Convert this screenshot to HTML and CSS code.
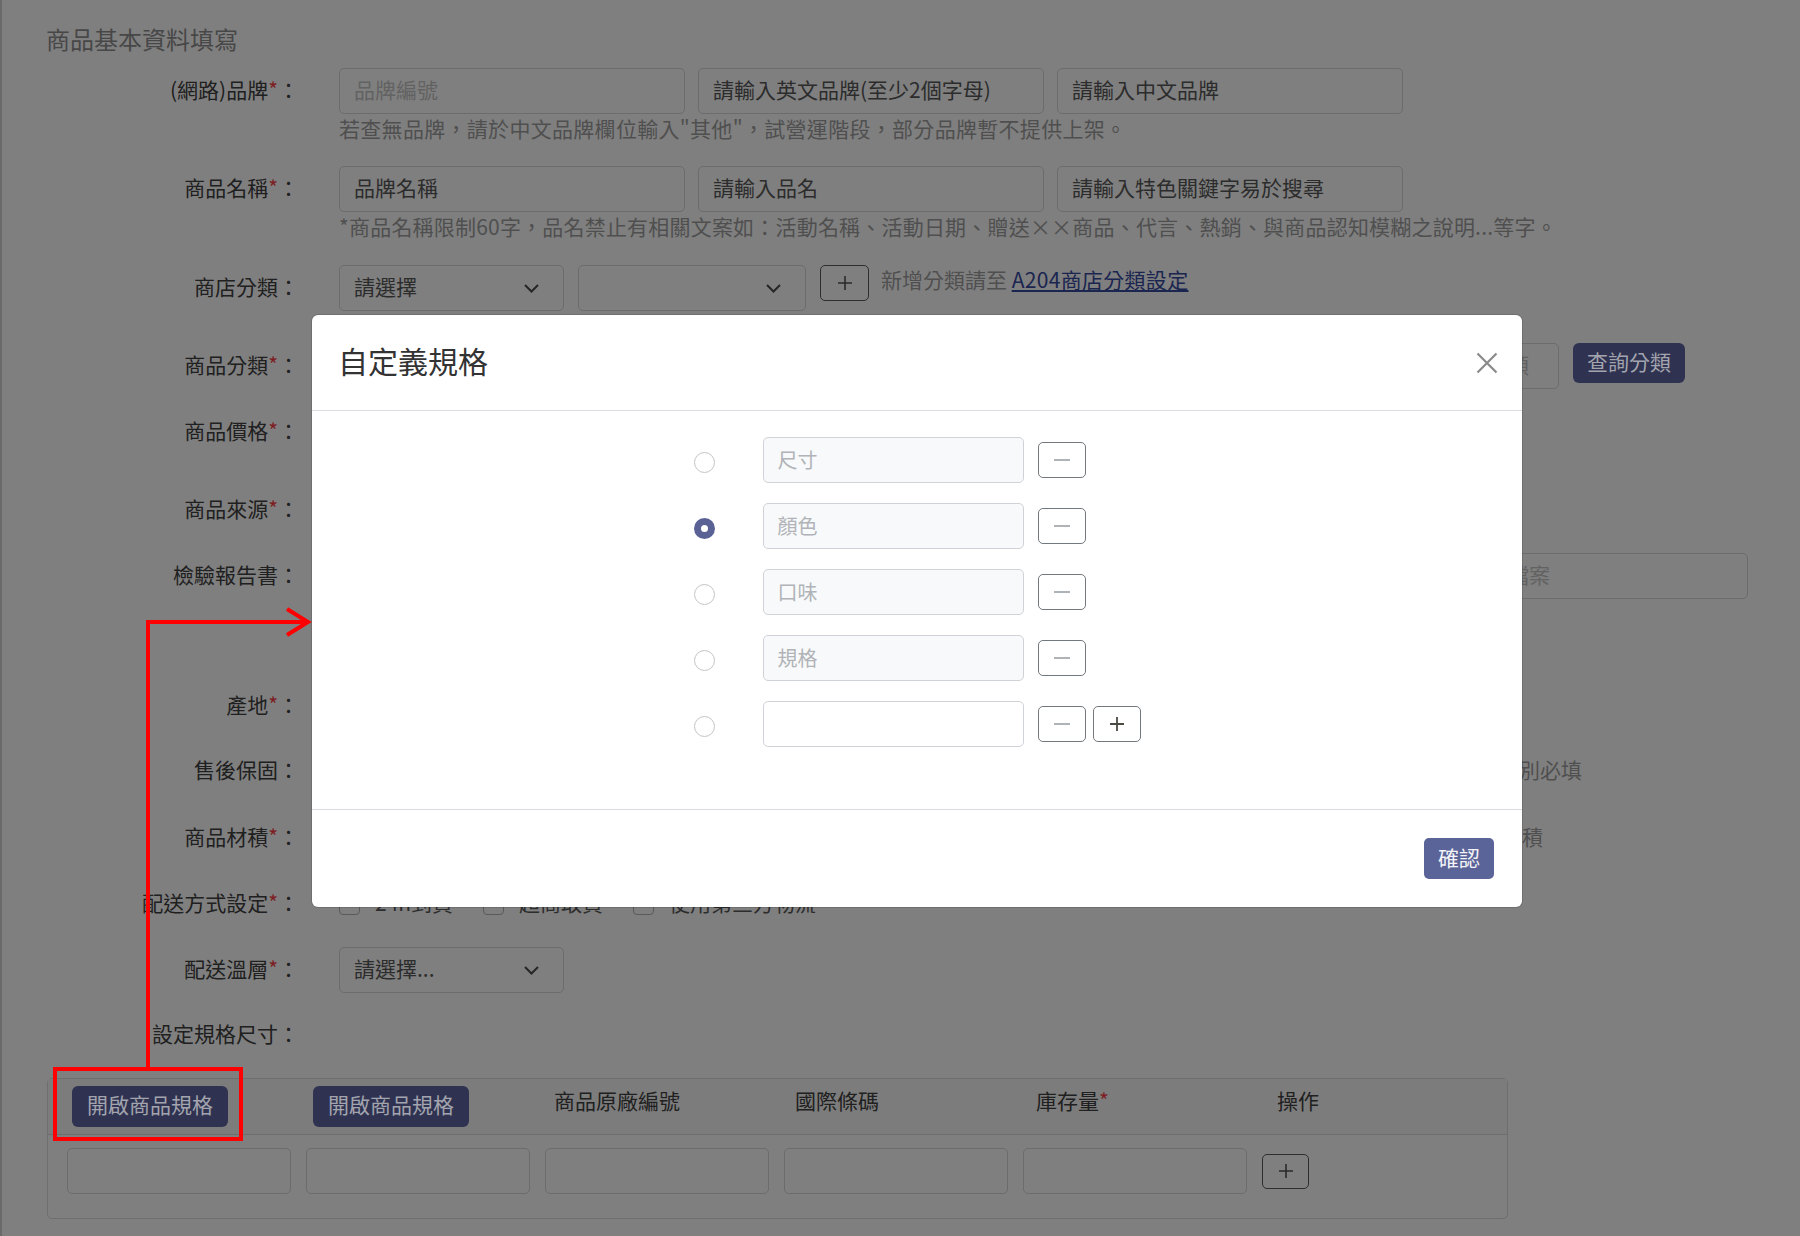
FILE: index.html
```html
<!DOCTYPE html>
<html lang="zh-Hant">
<head>
<meta charset="utf-8">
<title>自定義規格</title>
<link rel="stylesheet" href="styles.css">
</head>
<body>
<div class="page">
  <h1 class="page-title">商品基本資料填寫</h1>

  <div class="row mt-16">
    <div class="lbl">(網路)品牌<span class="req">*</span>：</div>
    <div class="ctrl gap-13">
      <div class="field w-346 muted">品牌編號</div>
      <div class="field w-346">請輸入英文品牌(至少2個字母)</div>
      <div class="field w-346">請輸入中文品牌</div>
    </div>
  </div>
  <p class="hint">若查無品牌，請於中文品牌欄位輸入"其他"，試營運階段，部分品牌暫不提供上架。</p>

  <div class="row mt-26">
    <div class="lbl">商品名稱<span class="req">*</span>：</div>
    <div class="ctrl gap-13">
      <div class="field w-346">品牌名稱</div>
      <div class="field w-346">請輸入品名</div>
      <div class="field w-346">請輸入特色關鍵字易於搜尋</div>
    </div>
  </div>
  <p class="hint tight">*商品名稱限制60字，品名禁止有相關文案如：活動名稱、活動日期、贈送××商品、代言、熱銷、與商品認知模糊之說明...等字。</p>

  <div class="row mt-27">
    <div class="lbl">商店分類：</div>
    <div class="ctrl top">
      <div class="field select w-225">請選擇<svg class="chev" width="15" height="9" viewBox="0 0 15 9"><path d="M1 1l6.5 6.5L14 1" fill="none" stroke="#262626" stroke-width="2"/></svg></div>
      <div class="field select w-228"><span></span><svg class="chev" width="15" height="9" viewBox="0 0 15 9"><path d="M1 1l6.5 6.5L14 1" fill="none" stroke="#262626" stroke-width="2"/></svg></div>
      <div class="icon-btn dark-btn"><svg width="16" height="16" viewBox="0 0 16 16"><path d="M8 1v14M1 8h14" stroke="#2b2b2b" stroke-width="1.6"/></svg></div>
      <span class="note top-note">新增分類請至 <a class="link" href="#">A204商店分類設定</a></span>
    </div>
  </div>

  <div class="row mt-32">
    <div class="lbl">商品分類<span class="req">*</span>：</div>
    <div class="ctrl top">
      <div class="field select w-225"></div>
      <div class="field select w-228"></div>
      <div class="field w-428"></div>
      <div class="field w-297 muted">請輸入關鍵字搜尋商品分類</div>
      <button class="btn-dark h-40">查詢分類</button>
    </div>
  </div>

  <div class="row mt-20">
    <div class="lbl">商品價格<span class="req">*</span>：</div>
    <div class="ctrl">
      <div class="field w-346"></div>
      <div class="field w-346"></div>
    </div>
  </div>

  <div class="row mt-32">
    <div class="lbl">商品來源<span class="req">*</span>：</div>
    <div class="ctrl">
      <div class="field select w-225"></div>
    </div>
  </div>

  <div class="row mt-20">
    <div class="lbl">檢驗報告書：</div>
    <div class="ctrl">
      <div class="field w-993"></div>
      <div class="field w-402 muted">請選擇要上傳的檔案</div>
    </div>
  </div>

  <div class="row mt-84">
    <div class="lbl">產地<span class="req">*</span>：</div>
    <div class="ctrl">
      <div class="field select w-225"></div>
    </div>
  </div>

  <div class="row mt-19">
    <div class="lbl">售後保固：</div>
    <div class="ctrl">
      <div class="field select w-225"></div>
      <div class="field w-612"></div>
      <span class="note">若有提供保固，保固期間及保固類別必填</span>
    </div>
  </div>

  <div class="row mt-21">
    <div class="lbl">商品材積<span class="req">*</span>：</div>
    <div class="ctrl">
      <div class="field w-373"></div>
      <div class="field w-373"></div>
      <div class="field w-374"></div>
      <span class="note">材積</span>
    </div>
  </div>

  <div class="row mt-20">
    <div class="lbl">配送方式設定<span class="req">*</span>：</div>
    <div class="ctrl checks">
      <label class="check"><span class="box"></span>24h到貨</label>
      <label class="check"><span class="box"></span>超商取貨</label>
      <label class="check"><span class="box"></span>使用第三方物流</label>
    </div>
  </div>

  <div class="row mt-20">
    <div class="lbl">配送溫層<span class="req">*</span>：</div>
    <div class="ctrl">
      <div class="field select w-225">請選擇...<svg class="chev" width="15" height="9" viewBox="0 0 15 9"><path d="M1 1l6.5 6.5L14 1" fill="none" stroke="#262626" stroke-width="2"/></svg></div>
    </div>
  </div>

  <div class="row mt-19">
    <div class="lbl">設定規格尺寸：</div>
  </div>

  <div class="spec-table mt-20">
    <div class="spec-head">
      <div class="th"><button class="btn-dark">開啟商品規格</button></div>
      <div class="th"><button class="btn-dark">開啟商品規格</button></div>
      <div class="th">商品原廠編號</div>
      <div class="th">國際條碼</div>
      <div class="th">庫存量<span class="req">*</span></div>
      <div class="th">操作</div>
    </div>
    <div class="spec-body">
      <div class="field"></div>
      <div class="field"></div>
      <div class="field"></div>
      <div class="field"></div>
      <div class="field"></div>
      <div class="icon-btn dark-btn small"><svg width="16" height="16" viewBox="0 0 16 16"><path d="M8 1v14M1 8h14" stroke="#2b2b2b" stroke-width="1.6"/></svg></div>
    </div>
  </div>
</div>

<div class="modal">
  <div class="modal-header">
    <h2 class="modal-title">自定義規格</h2>
    <svg class="close" width="22" height="22" viewBox="0 0 22 22"><path d="M1.5 1.5l19 19M20.5 1.5l-19 19" stroke="#8a8a8a" stroke-width="2.2" fill="none"/></svg>
  </div>
  <div class="modal-body">
    <div class="spec-list">
      <div class="spec-row">
        <span class="radio"></span>
        <div class="spec-input">尺寸</div>
        <div class="sq-btn"><span class="minus"></span></div>
      </div>
      <div class="spec-row">
        <span class="radio checked"></span>
        <div class="spec-input">顏色</div>
        <div class="sq-btn"><span class="minus"></span></div>
      </div>
      <div class="spec-row">
        <span class="radio"></span>
        <div class="spec-input">口味</div>
        <div class="sq-btn"><span class="minus"></span></div>
      </div>
      <div class="spec-row">
        <span class="radio"></span>
        <div class="spec-input">規格</div>
        <div class="sq-btn"><span class="minus"></span></div>
      </div>
      <div class="spec-row">
        <span class="radio"></span>
        <div class="spec-input empty"></div>
        <div class="sq-btn"><span class="minus"></span></div>
        <div class="sq-btn plus"><svg width="16" height="16" viewBox="0 0 16 16"><path d="M8 1v14M1 8h14" stroke="#4a4a44" stroke-width="1.8"/></svg></div>
      </div>
    </div>
  </div>
  <div class="modal-footer">
    <button class="btn-primary">確認</button>
  </div>
</div>

<svg class="annot" width="1800" height="1236" viewBox="0 0 1800 1236">
  <rect x="55" y="1069" width="186" height="70" fill="none" stroke="#ff0000" stroke-width="4"/>
  <polyline points="148,1067 148,622 307,622" fill="none" stroke="#ff0000" stroke-width="4"/>
  <polyline points="287,609 308,622 287,635" fill="none" stroke="#ff0000" stroke-width="4"/>
</svg>
</body>
</html>
```

FILE: styles.css
```css
* { box-sizing: border-box; }

body {
  margin: 0;
  width: 1800px;
  height: 1236px;
  overflow: hidden;
  position: relative;
  background: #7f7f7f;
  box-shadow: inset 2px 0 0 #6a6a6a;
  font-family: "Noto Sans CJK TC", "Noto Sans", sans-serif;
  color: #222;
}

.page { padding-top: 26px; }

.page-title {
  margin: 0 0 0 46px;
  font-size: 24px;
  line-height: 26px;
  font-weight: 400;
  color: #474747;
}

/* spacing utilities */
.mt-16 { margin-top: 16px; }
.mt-19 { margin-top: 19px; }
.mt-20 { margin-top: 20px; }
.mt-21 { margin-top: 21px; }
.mt-26 { margin-top: 26px; }
.mt-27 { margin-top: 27px; }
.mt-32 { margin-top: 32px; }
.mt-84 { margin-top: 84px; }

.row {
  display: flex;
  align-items: center;
  height: 46px;
}

.lbl {
  width: 299px;
  flex: none;
  text-align: right;
  font-size: 21px;
  line-height: 42px;
  padding-bottom: 4px;
  color: #202020;
  white-space: nowrap;
}

.req { color: #7c1e24; }

.ctrl {
  margin-left: 40px;
  display: flex;
  align-items: center;
  gap: 14px;
  height: 46px;
}
.ctrl.top { align-items: flex-start; }
.gap-13 { gap: 13px; }

.hint {
  margin: 2px 0 0 339px;
  font-size: 21px;
  line-height: 24px;
  color: #4f4f4f;
  white-space: nowrap;
  letter-spacing: 0.3px;
}
.hint.tight { letter-spacing: 0.2px; }

.field {
  flex: none;
  height: 46px;
  border: 1px solid #6c6c6c;
  border-radius: 5px;
  padding: 0 14px 4px;
  display: flex;
  align-items: center;
  font-size: 21px;
  color: #2c2c2c;
  white-space: nowrap;
  overflow: hidden;
}
.field.muted { color: #626262; }
.field.select { justify-content: space-between; padding-right: 24px; }
.chev { flex: none; margin-top: 4px; }

.w-225 { width: 225px; }
.w-228 { width: 228px; }
.w-297 { width: 297px; }
.w-346 { width: 346px; }
.w-373 { width: 373px; }
.w-374 { width: 374px; }
.w-402 { width: 402px; }
.w-428 { width: 428px; }
.w-612 { width: 612px; }
.w-993 { width: 993px; }

.icon-btn {
  flex: none;
  width: 49px;
  height: 36px;
  border-radius: 5px;
  display: flex;
  align-items: center;
  justify-content: center;
}
.dark-btn { border: 1.5px solid #2e2e2e; }
.icon-btn.small { width: 47px; height: 35px; }

.note {
  font-size: 21px;
  line-height: 42px;
  padding-bottom: 4px;
  color: #4f4f4f;
  white-space: nowrap;
}
.note.top-note { line-height: 28px; padding: 0; margin-left: -2px; }
.link { color: #1a2550; text-decoration: underline; letter-spacing: 0.3px; }

.btn-dark {
  flex: none;
  height: 41px;
  padding: 0 15px 4px;
  border: 0;
  border-radius: 6px;
  background: #2f3351;
  color: #a3a4ae;
  font-family: inherit;
  font-size: 21px;
  line-height: 37px;
}
.btn-dark.h-40 { height: 40px; line-height: 36px; padding: 0 14px 4px; }

.checks { gap: 30px; }
.check {
  display: flex;
  align-items: center;
  gap: 15px;
  font-size: 21px;
  line-height: 42px;
  padding-bottom: 4px;
  color: #2c2c2c;
  white-space: nowrap;
}
.box {
  width: 21px;
  height: 21px;
  margin-top: 4px;
  border: 1.5px solid #5a5a5a;
  border-radius: 4px;
}

/* spec table (background) */
.spec-table {
  margin-left: 47px;
  width: 1461px;
  border: 1px solid #6e6e6e;
  border-radius: 5px;
}
.spec-head {
  display: grid;
  grid-template-columns: repeat(6, 241px);
  padding: 7px 0 7px 24px;
  border-bottom: 1px solid #6e6e6e;
  background: #7c7c7c;
}
.th {
  font-size: 21px;
  line-height: 28px;
  color: #202020;
  white-space: nowrap;
}
.spec-body {
  display: grid;
  grid-template-columns: repeat(5, 224px) 47px;
  column-gap: 15px;
  align-items: center;
  padding: 13px 0 24px 19px;
}
.spec-body .field { width: 224px; }

/* modal */
.modal {
  position: absolute;
  left: 312px;
  top: 315px;
  width: 1210px;
  height: 592px;
  background: #fff;
  border-radius: 6px;
  box-shadow: 0 0 0 1px rgba(0, 0, 0, 0.12);
  display: flex;
  flex-direction: column;
  overflow: hidden;
  z-index: 10;
}
.modal-header {
  height: 96px;
  flex: none;
  border-bottom: 1px solid #d9dce0;
  display: flex;
  align-items: center;
  justify-content: space-between;
  padding: 0 24px 0 26px;
}
.modal-title {
  margin: 0;
  padding-bottom: 6px;
  font-size: 30px;
  line-height: 36px;
  font-weight: 400;
  color: #333;
}
.close { flex: none; }

.modal-body {
  height: 398px;
  flex: none;
  padding-top: 26px;
}
.spec-list {
  width: 447px;
  margin: 0 auto;
  display: flex;
  flex-direction: column;
  gap: 20px;
}
.spec-row {
  display: flex;
  align-items: center;
  height: 46px;
}
.radio {
  flex: none;
  width: 21px;
  height: 21px;
  margin: 4px 48px 0 0;
  border: 1.5px solid #c4c4c4;
  border-radius: 50%;
  background: #fff;
}
.radio.checked { border: 7px solid #5a6195; }
.spec-input {
  flex: none;
  width: 261px;
  height: 46px;
  margin-right: 14px;
  padding: 0 14px 2px;
  border: 1px solid #cfd3d7;
  border-radius: 5px;
  background: #f8f9fa;
  display: flex;
  align-items: center;
  font-size: 20px;
  color: #b0b3b7;
}
.spec-input.empty { background: #fff; }
.sq-btn {
  flex: none;
  width: 48px;
  height: 36px;
  border: 1.5px solid #73787e;
  border-radius: 5px;
  display: flex;
  align-items: center;
  justify-content: center;
  background: #fff;
}
.sq-btn.plus { margin-left: 7px; }
.minus {
  width: 16px;
  height: 2px;
  background: #aeb3b8;
}

.modal-footer {
  height: 98px;
  flex: none;
  border-top: 1px solid #d9dce0;
  display: flex;
  justify-content: flex-end;
  align-items: center;
  padding-right: 28px;
}
.btn-primary {
  height: 41px;
  padding: 0 14px 2px;
  border: 0;
  border-radius: 5px;
  background: #5b6498;
  color: #f4f4f8;
  font-family: inherit;
  font-size: 21px;
  line-height: 39px;
}

.annot {
  position: absolute;
  left: 0;
  top: 0;
  z-index: 20;
  pointer-events: none;
}
```
